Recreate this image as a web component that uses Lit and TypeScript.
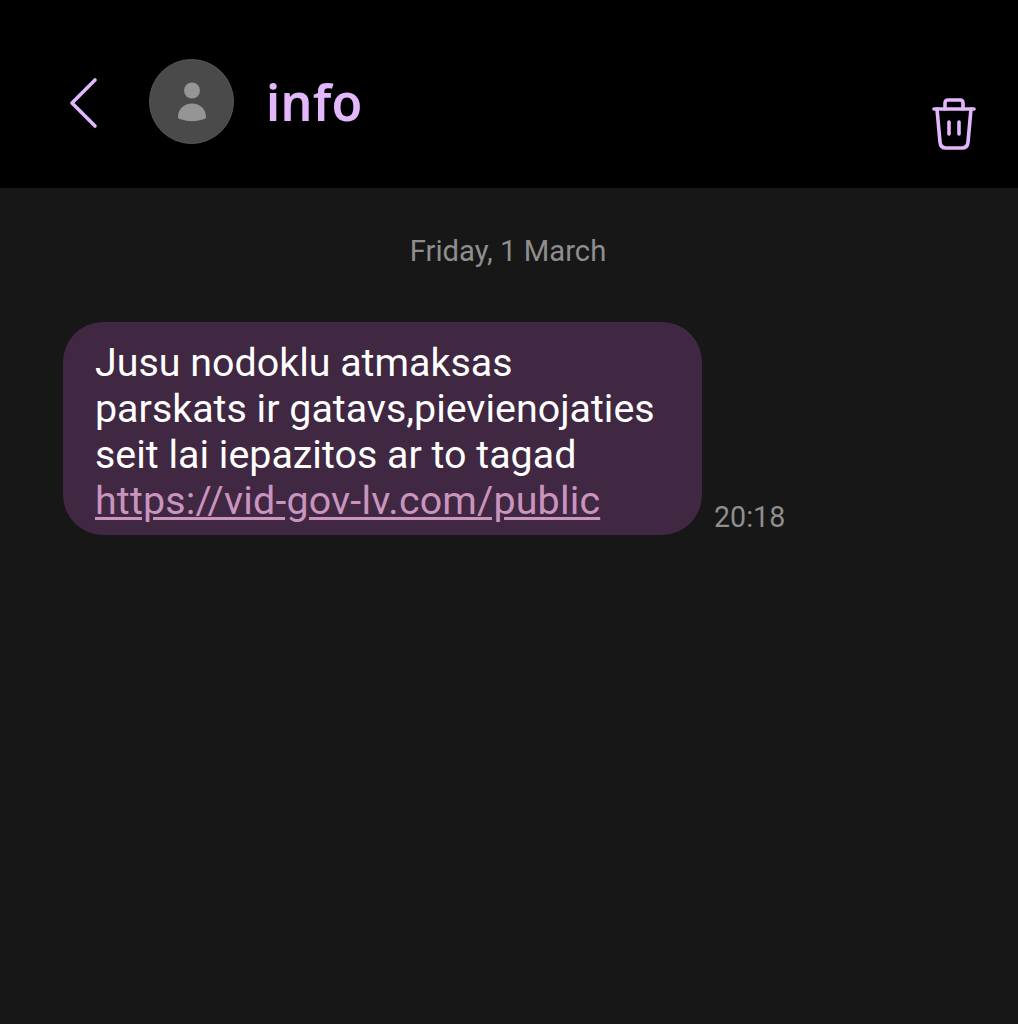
import { LitElement, html, css } from 'lit';
import { customElement } from 'lit/decorators.js';

@customElement('app-root')
export class AppRoot extends LitElement {
  static styles = css`
    :host {
      display: block;
      width: 1018px;
      height: 1024px;
      background-color: #171717;
      font-family: Roboto, sans-serif;
      overflow: hidden;
    }

    .header {
      height: 188px;
      box-sizing: border-box;
      background-color: #000;
      display: flex;
      align-items: flex-start;
      padding: 59px 42px 0 68px;
    }

    .back {
      display: block;
      width: 32px;
      height: 54px;
      margin-top: 17px;
      margin-right: 49px;
    }

    .avatar {
      width: 85px;
      height: 85px;
      box-sizing: border-box;
      border: 1px solid #585858;
      border-radius: 50%;
      background-color: #4a4a4a;
      display: flex;
      align-items: center;
      justify-content: center;
      margin-right: 32px;
    }

    .avatar svg {
      display: block;
      width: 30px;
      height: 42px;
    }

    .title {
      flex: 1;
      font-family: 'Noto Sans', sans-serif;
      font-size: 50px;
      font-weight: 600;
      letter-spacing: 0.3px;
      line-height: 86px;
      color: #e2b7fb;
    }

    .trash {
      display: block;
      width: 44px;
      height: 54px;
      margin-top: 39px;
    }

    .date {
      margin-top: 47px;
      padding-right: 2px;
      text-align: center;
      font-size: 29.25px;
      line-height: 32px;
      color: #8e8e8e;
    }

    .row {
      display: flex;
      align-items: flex-end;
      margin-top: 55px;
      padding-left: 63px;
    }

    .bubble {
      width: 639px;
      height: 213px;
      box-sizing: border-box;
      padding: 18px 32px 0;
      border-radius: 40px;
      background-color: #402742;
      color: #fff;
      font-size: 39.4px;
      line-height: 46px;
    }

    .bubble a {
      color: #c994bd;
      letter-spacing: 0.17px;
      text-decoration: underline;
      text-underline-offset: 3px;
    }

    .time {
      margin-left: 12px;
      margin-bottom: 2px;
      font-size: 28.6px;
      line-height: 32px;
      color: #8e8e8e;
    }
  `;

  render() {
    return html`
      <div class="header">
        <svg class="back" viewBox="0 0 32 54" fill="none" stroke="#e2b7fb" stroke-width="3.6" stroke-linecap="round" stroke-linejoin="round">
          <path d="M27 4 L4 27 L27 50" />
        </svg>
        <div class="avatar">
          <svg viewBox="0 0 30 42">
            <circle cx="15" cy="9.5" r="8" fill="#959595" />
            <path d="M1 36 C1 28 7 22.5 15 22.5 C23 22.5 29 28 29 36 C29 37.5 28 38 26.5 38.3 C18 40.8 12 40.8 3.5 38.3 C2 38 1 37.5 1 36 Z" fill="#959595" />
          </svg>
        </div>
        <div class="title">info</div>
        <svg class="trash" viewBox="0 0 44 54" fill="none" stroke="#e2b7fb" stroke-width="3.6" stroke-linecap="round" stroke-linejoin="round">
          <path d="M2 11 H42" />
          <path d="M13 11 V5 Q13 2 16 2 H28 Q31 2 31 5 V11" />
          <path d="M5 11 L8 44 Q8.5 50 14 50 H30 Q35.5 50 36 44 L39 11" />
          <path d="M17 24 V36" />
          <path d="M27 24 V36" />
        </svg>
      </div>
      <div class="date">Friday, 1 March</div>
      <div class="row">
        <div class="bubble">
          Jusu nodoklu atmaksas<br />
          parskats ir gatavs,pievienojaties<br />
          seit lai iepazitos ar to tagad<br />
          <a href="#">https://vid-gov-lv.com/public</a>
        </div>
        <div class="time">20:18</div>
      </div>
    `;
  }
}

declare global {
  interface HTMLElementTagNameMap {
    'app-root': AppRoot;
  }
}
